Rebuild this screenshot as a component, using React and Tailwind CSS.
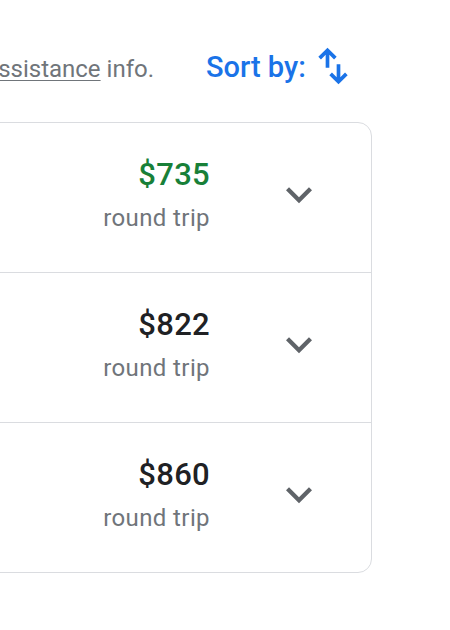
import React from "react";

const rows = [
  { price: "$735", green: true },
  { price: "$822", green: false },
  { price: "$860", green: false },
];

function SortIcon() {
  return (
    <svg
      width="44"
      height="44"
      viewBox="0 -960 960 960"
      className="shrink-0 self-start -mt-[3px] ml-[5px]"
      fill="#1a73e8"
    >
      <path d="M320-440v-287L217-624l-57-56 200-200 200 200-57 56-103-103v287h-80ZM600-80 400-280l57-56 103 103v-287h80v287l103-103 57 56L600-80Z" />
    </svg>
  );
}

function Chevron() {
  return (
    <svg width="52" height="52" viewBox="0 -960 960 960" fill="#5f6368" className="shrink-0 -mt-[3px]">
      <path d="M480-345 240-585l56-56 184 184 184-184 56 56-240 240Z" />
    </svg>
  );
}

export default function App() {
  return (
    <div
      className="relative w-[450px] h-[630px] overflow-hidden bg-white"
      style={{ fontFamily: "Roboto, 'Liberation Sans', sans-serif" }}
    >
      <div className="flex items-baseline h-[40px] mt-[47px]">
        <div className="w-[154px] flex justify-end shrink-0">
          <span className="whitespace-nowrap text-[24px] leading-[40px] text-[#70757a]">
            Prices include required taxes + fees for 1 adult. Optional charges and bag fees may apply. Passenger{" "}
            <span className="underline underline-offset-[3px] decoration-[1px]">assistance</span> info.
          </span>
        </div>
        <span className="ml-[52px] whitespace-nowrap text-[29px] leading-[40px] font-medium text-[#1a73e8]">
          Sort by:
        </span>
        <SortIcon />
      </div>

      <div className="ml-[-20px] mt-[35px] w-[392px] border border-[#dadce0] rounded-[14px]">
        {rows.map((r, i) => (
          <div
            key={i}
            className={
              "flex items-center justify-end pr-[46px] " +
              (i > 0 ? "h-[150px] border-t border-[#dadce0]" : "h-[149px]")
            }
          >
            <div className="flex flex-col items-end -mt-[4px]">
              <span
                className={
                  "text-[31px] leading-[36px] font-medium tracking-[0.3px] " +
                  (r.green ? "text-[#188038]" : "text-[#202124]")
                }
              >
                {r.price}
              </span>
              <span className="mt-[9px] text-[24px] leading-[32px] tracking-[0.4px] text-[#70757a]">
                round trip
              </span>
            </div>
            <div className="ml-[63px] flex items-center">
              <Chevron />
            </div>
          </div>
        ))}
      </div>
    </div>
  );
}
